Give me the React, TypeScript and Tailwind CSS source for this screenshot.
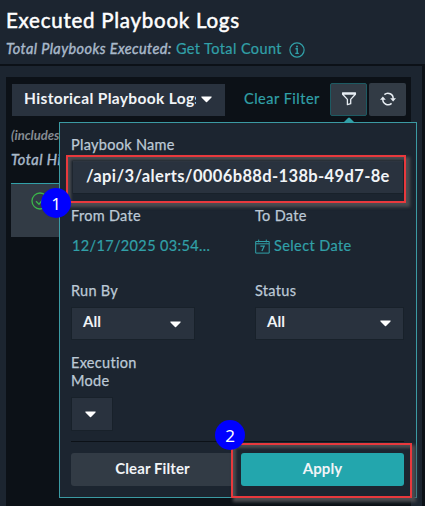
import type { ReactNode } from 'react';

function Caret({ className = '' }: { className?: string }) {
  return (
    <svg viewBox="0 0 11 7" className={`h-[7px] w-[11px] shrink-0 ${className}`} fill="#fff">
      <path d="M.8.6h9.400c.5 0 .6.500.3.800L6 6c-.3.300-.7.300-1 0L.5 1.400C.2 1.100.3.600.8.600z" />
    </svg>
  );
}

function FilterIcon() {
  return (
    <svg viewBox="0 0 16 16" className="h-4 w-4" fill="none" stroke="#e8eef4" strokeWidth="1.300" strokeLinejoin="round">
      <path d="M1.600 1.800h12.800v1.400L9.700 8.400v4.300l-3.300 1V8.400L1.600 3.200zM1.600 3h12.800" />
    </svg>
  );
}

function RefreshIcon() {
  return (
    <svg viewBox="0 0 16 16" className="h-4 w-4" fill="none" stroke="#e8eef4" strokeWidth="1.500">
      <path d="M4.400 3.600a5.200 5.200 0 0 1 8.700 4.300" />
      <path d="M11.600 12.400a5.200 5.200 0 0 1-8.700-4.300" />
      <path d="M10.200 7.300h5.800l-2.900 3.200z" fill="#e8eef4" stroke="none" />
      <path d="M0 8.700h5.800L2.900 5.500z" fill="#e8eef4" stroke="none" />
    </svg>
  );
}

function InfoIcon() {
  return (
    <svg viewBox="0 0 16 16" className="h-4 w-4" fill="none" stroke="#31a0a8">
      <circle cx="8" cy="8" r="7.100" strokeWidth="1.200" />
      <path d="M6.500 6.800h1.700v4.400M6.300 11.400h3.500" strokeWidth="1.400" />
      <circle cx="8" cy="4.600" r="1" fill="#31a0a8" stroke="none" />
    </svg>
  );
}

function CalendarIcon() {
  return (
    <svg viewBox="0 0 15 15" className="h-[15px] w-[15px]" fill="none" stroke="#31a0a8" strokeWidth="1">
      <path d="M.7 2.500h13.500v11.600H.7zM.7 4.800h13.500M3.700.6v2.800M11.300.6v2.800" />
      <path d="M5.400 7.200h3.800L6.900 12" strokeWidth="1.200" />
    </svg>
  );
}

function Label({ children }: { children: ReactNode }) {
  return (
    <div className="text-[14.500px] leading-[18px] tracking-[0.3px] text-[#bcc9d6] [-webkit-text-stroke:0.25px]">
      {children}
    </div>
  );
}

function Marker({ n, className }: { n: number; className: string }) {
  return (
    <div
      className={`absolute flex h-[30px] w-[30px] items-center justify-center rounded-full bg-[#0000ff] font-['Noto_Sans',sans-serif] text-[17px] leading-none text-white ${className}`}
    >
      {n}
    </div>
  );
}

function Highlight({ className }: { className: string }) {
  return (
    <div
      className={`pointer-events-none absolute border-2 border-[#e8393d] shadow-[3px_3px_3px_1px_#4b4c50,inset_3px_3px_3px_0px_#4b4c50] ${className}`}
    />
  );
}

function FilterPopup() {
  return (
    <section className="absolute top-[122px] left-[59px] flex h-[376px] w-[358px] flex-col border border-[#3b9aa3] bg-[#1c2530] px-[11px] pt-[13px]">
      <svg viewBox="0 0 12 6" className="absolute -top-[6px] left-[283px] h-[6px] w-3" fill="#31a0a8">
        <path d="M0 6l5-5q1-1 2 0l5 5z" />
      </svg>
      <Label>Playbook Name</Label>
      <div className="mt-[6px] ml-px flex h-[34px] w-[332px] items-center overflow-hidden border border-[#18212a] bg-[#29323e] pb-px pl-[13px] text-[16.500px] font-bold tracking-[0.37px] whitespace-nowrap text-[#f1f4f7]">
        /api/3/alerts/0006b88d-138b-49d7-8e
      </div>
      <div className="mt-[13px] grid grid-cols-[184px_150px]">
        <Label>From Date</Label>
        <Label>To Date</Label>
      </div>
      <div className="mt-3 grid grid-cols-[184px_150px] text-[14.500px] leading-[18px] text-[#31a0a8] [-webkit-text-stroke:0.2px]">
        <div className="pl-px tracking-[0.35px]">12/17/2025 03:54...</div>
        <div className="flex items-center gap-1 tracking-[0.4px]">
          <CalendarIcon />
          Select Date
        </div>
      </div>
      <div className="mt-[27px] grid grid-cols-[184px_150px]">
        <Label>Run By</Label>
        <Label>Status</Label>
      </div>
      <div className="mt-[7px] grid grid-cols-[184px_150px] text-[15px] font-bold text-[#f1f4f7]">
        <div className="flex h-[33px] w-[124px] items-center justify-between border border-[#18212a] bg-[#29323e] pr-[13px] pb-1 pl-[11px]">
          All
          <Caret className="mt-[5px]" />
        </div>
        <div className="flex h-[33px] w-[149px] items-center justify-between border border-[#18212a] bg-[#29323e] pr-[12px] pb-1 pl-[11px]">
          All
          <Caret className="mt-[3px]" />
        </div>
      </div>
      <div className="mt-[14px] w-24">
        <Label>Execution Mode</Label>
      </div>
      <div className="mt-[7px] flex h-[34px] w-[42px] items-center border border-[#18212a] bg-[#29323e] pl-[13px]">
        <Caret />
      </div>
      <div className="mt-[10px] h-px w-[333px] bg-[#0c1117]" />
      <div className="mt-[11px] flex gap-[7px] text-[15px] leading-[30px] font-bold tracking-[0.1px] text-[#f1f4f7]">
        <button className="h-[33px] w-[163px] rounded-[3px] bg-[#323b45] pb-[3px]">Clear Filter</button>
        <button className="h-[33px] w-[163px] rounded-[3px] bg-[#23a6ad] pb-[3px]">Apply</button>
      </div>
    </section>
  );
}

export default function App() {
  return (
    <main className="relative flex h-[506px] w-[425px] flex-col overflow-hidden bg-[#1c2530] font-[Lato,sans-serif]">
      <header className="h-[66px] border-b-2 border-[#0c1117] pt-[6px] pl-[6px]">
        <h1 className="text-[20.500px] leading-7 tracking-[0.75px] text-white [-webkit-text-stroke:0.5px]">Executed Playbook Logs</h1>
        <div className="flex items-center pt-[5px] text-[14.500px] leading-[18px]">
          <span className="tracking-[0.4px] text-[#a9b9ca] italic [-webkit-text-stroke:0.4px]">Total Playbooks Executed:</span>
          <span className="ml-1 tracking-[0.4px] text-[#31a0a8] [-webkit-text-stroke:0.2px]">Get Total Count</span>
          <span className="ml-[7px] pt-[3px]">
            <InfoIcon />
          </span>
        </div>
      </header>
      <div className="flex flex-1 border-r-[3px] border-[#0c1117] pt-[11px] pr-[11px] pl-[6px]">
        <div className="flex-1 bg-[#0c1117] pt-[6px] pl-[5px]">
          <div className="flex items-center">
            <div className="ml-px flex h-8 w-[213px] items-center bg-[#29323e] pb-[2px] pl-3 text-[15.500px] font-bold text-[#f1f4f7]">
              <span className="w-[172px] overflow-hidden tracking-[0.35px] whitespace-nowrap">Historical Playbook Logs</span>
              <Caret className="mt-px ml-[5px]" />
            </div>
            <span className="ml-[19px] w-[86px] pb-[2px] text-[14.500px] tracking-[0.5px] whitespace-nowrap text-[#31a0a8] [-webkit-text-stroke:0.2px]">Clear Filter</span>
            <button className="flex h-[33px] w-[37px] items-center justify-center rounded-[2px] border border-[#1d5a62] bg-[#323b45] pb-[2px]">
              <FilterIcon />
            </button>
            <button className="ml-[2px] flex h-[33px] w-[37px] items-center justify-center rounded-[2px] bg-[#323b45] pb-[2px]">
              <RefreshIcon />
            </button>
          </div>
          <div className="mt-[10px] text-[13px] leading-[18px] font-bold text-[#858b92] italic">(includes</div>
          <div className="mt-[7px] text-[14.500px] leading-[18px] tracking-[0.5px] text-[#a9b9ca] italic [-webkit-text-stroke:0.4px]">Total Hi</div>
          <div className="mt-[14px] flex h-[54px] w-24 border-t border-[#31a0a8] bg-[#323b45] pt-2 pl-[20px]">
            <svg viewBox="0 0 18 18" className="h-[18px] w-[18px]" fill="none" stroke="#3bb54a" strokeWidth="1.300">
              <circle cx="9" cy="9" r="8" />
              <path d="M5 9.200l3 3 5-6.200" />
            </svg>
          </div>
        </div>
      </div>
      <FilterPopup />
      <Highlight className="top-[155px] left-[66px] h-[48px] w-[340px]" />
      <Highlight className="top-[443px] left-[231px] h-[55px] w-[181px]" />
      <Marker n={1} className="top-[188px] left-[41px]" />
      <Marker n={2} className="top-[420px] left-[215px]" />
    </main>
  );
}
